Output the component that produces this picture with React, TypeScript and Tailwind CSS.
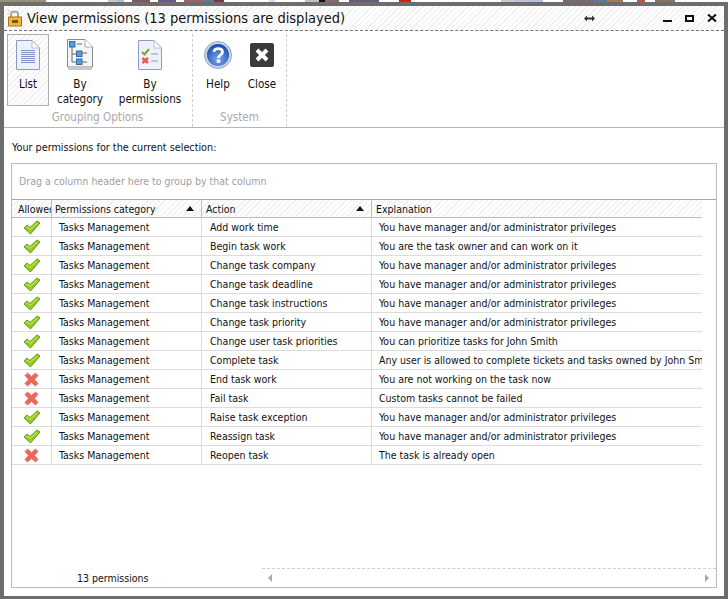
const hatch = "bg-[repeating-linear-gradient(135deg,#efefef_0px,#efefef_1px,#fdfdfd_1px,#fdfdfd_4px)]";
const rows: [boolean, string, string][] = [
  [true, "Add work time", "You have manager and/or administrator privileges"],
  [true, "Begin task work", "You are the task owner and can work on it"],
  [true, "Change task company", "You have manager and/or administrator privileges"],
  [true, "Change task deadline", "You have manager and/or administrator privileges"],
  [true, "Change task instructions", "You have manager and/or administrator privileges"],
  [true, "Change task priority", "You have manager and/or administrator privileges"],
  [true, "Change user task priorities", "You can prioritize tasks for John Smith"],
  [true, "Complete task", "Any user is allowed to complete tickets and tasks owned by John Smith"],
  [false, "End task work", "You are not working on the task now"],
  [false, "Fail task", "Custom tasks cannot be failed"],
  [true, "Raise task exception", "You have manager and/or administrator privileges"],
  [true, "Reassign task", "You have manager and/or administrator privileges"],
  [false, "Reopen task", "The task is already open"],
];
const scraps: [number, string][] = [
  [46, "#9a8f7a"], [50, "#ffffff"], [12, "#ffffff"], [10, "#c8c8c8"], [6, "#9fc3df"], [8, "#ffffff"], [18, "#7a5a5a"], [8, "#ffffff"], [18, "#6a5a8a"], [8, "#ffffff"], [20, "#a06060"], [10, "#5a7a9a"], [10, "#803050"], [45, "#ffffff"], [6, "#dddddd"], [30, "#ffffff"], [14, "#c0c0c0"], [6, "#111111"], [14, "#8a6a6a"],
  [10, "#ffffff"], [30, "#6a5a7a"], [20, "#ffffff"], [12, "#d02020"], [90, "#ffffff"], [14, "#c8c8d8"], [28, "#b8c0e0"], [20, "#ffffff"], [30, "#7a6a6a"], [14, "#5a7a9a"], [16, "#a08040"], [14, "#ffffff"], [8, "#c05050"], [10, "#ffffff"], [20, "#8a7060"],
];

function Check() {
  return (
    <svg width="18" height="15" viewBox="0 0 18 15">
      <path d="M1 8 L4 5 L7 7.5 L14 1 L17 3 L7.5 14 Z" fill="#98c91f" stroke="#669f14" strokeWidth="1" strokeLinejoin="round" />
      <path d="M3 8 L4.5 7 L7 9.5 L14 3" fill="none" stroke="#cfea77" strokeWidth="1" />
    </svg>
  );
}
function Cross() {
  return (
    <svg width="15" height="15" viewBox="0 0 15 15">
      <path d="M3.5 1 L7.5 4.5 L11.5 1 L14 3.5 L10.5 7.5 L14 11.5 L11.5 14 L7.5 10.5 L3.5 14 L1 11.5 L4.5 7.5 L1 3.5 Z" fill="#f0655a" stroke="#d98177" strokeWidth="1" strokeLinejoin="round" />
    </svg>
  );
}
function Page({ children }: { children?: React.ReactNode }) {
  return (
    <svg width="24" height="30" viewBox="0 0 24 30">
      <path d="M0.5 0.5 H16 L23.5 8 V29.5 H0.5 Z" fill="#eef1fb" stroke="#8e99c4" />
      <path d="M16 0.5 V8 H23.5 Z" fill="#fff" stroke="#b6bdd8" />
      {children}
    </svg>
  );
}
function ListIcon() {
  return (
    <Page>
      {[10, 12, 14, 16, 18, 20, 22].map((y) => (
        <rect key={y} x="5" y={y} width="14" height="1" fill="#7f8fc8" />
      ))}
    </Page>
  );
}
function CategoryIcon() {
  return (
    <svg width="26" height="32" viewBox="0 0 26 32">
      <path d="M0.5 0.5 H18 L25.5 8 V28 H0.5 Z" fill="#f6f6f6" stroke="#8a8a8a" />
      <rect x="1" y="28" width="24" height="3" fill="#c9c9c9" />
      <path d="M18 0.5 V8 H25.5" fill="#fff" stroke="#aaa" />
      <path d="M5 8 V23 H9 M5 15 H9 M10 5 H15 M15 14 H20 M15 23 H20" fill="none" stroke="#666" />
      <rect x="2.5" y="2.5" width="5.5" height="5.5" fill="#5b9bd5" stroke="#2f6ea5" />
      <rect x="9.5" y="12" width="5.5" height="5.5" fill="#5b9bd5" stroke="#2f6ea5" />
      <rect x="9.5" y="20" width="5.5" height="5.5" fill="#5b9bd5" stroke="#2f6ea5" />
    </svg>
  );
}
function PermIcon() {
  return (
    <Page>
      <path d="M4 12 L6.5 14.5 L11 9" fill="none" stroke="#6fae1e" strokeWidth="2" />
      <path d="M4.5 18 L10 23 M10 18 L4.5 23" fill="none" stroke="#e9574c" strokeWidth="2.4" />
      <path d="M13 14 H20 M13 21 H20" stroke="#7f9bc0" strokeWidth="1" />
    </Page>
  );
}
function HelpIcon() {
  return (
    <svg width="28" height="28" viewBox="0 0 28 28">
      <defs>
        <radialGradient id="hb" cx="50%" cy="70%" r="65%">
          <stop offset="0%" stopColor="#7fa8ee" />
          <stop offset="100%" stopColor="#1f4fa8" />
        </radialGradient>
      </defs>
      <circle cx="14" cy="14" r="13.5" fill="#c6d3ea" stroke="#8fa5cc" />
      <circle cx="14" cy="14" r="11" fill="url(#hb)" />
      <path d="M10 11 C10 6.5 18.5 6.5 18.5 11 C18.5 14 14.5 14 14.5 17" fill="none" stroke="#fff" strokeWidth="2.8" />
      <rect x="12.8" y="18.5" width="3.4" height="3.2" fill="#fff" />
    </svg>
  );
}
function CloseIcon() {
  return (
    <svg width="24" height="24" viewBox="0 0 24 24">
      <rect width="24" height="24" rx="2" fill="#3a3a3a" />
      <path d="M7 7 L17 17 M17 7 L7 17" stroke="#fff" strokeWidth="4" />
    </svg>
  );
}
function Tool({ icon, label, w, active }: { icon: React.ReactNode; label: React.ReactNode; w: string; active?: boolean }) {
  return (
    <div className={`${w} h-[72px] flex flex-col items-center text-center pt-[4px] border ${active ? `border-[#adadad] ${hatch}` : "border-transparent"}`}>
      <div className="h-[32px] shrink-0 flex items-center justify-center">{icon}</div>
      <div className="mt-[6px] shrink-0 leading-[15px] text-[#111] text-[11.6px]">{label}</div>
    </div>
  );
}

export default function App() {
  return (
    <div className="w-[728px] h-[599px] overflow-hidden bg-[#6d6d6d] flex flex-col text-[10.5px] text-[#111] [font-family:'DejaVu_Sans_Condensed','DejaVu_Sans',sans-serif]">
      <div className="h-[2px] shrink-0 bg-white flex">
        {scraps.map(([w, c], i) => (
          <div key={i} style={{ width: w, background: c }} />
        ))}
      </div>
      <div className="flex-1 min-h-0 pt-[4px] px-[4px] pb-[3px]">
        <div className="h-full bg-white flex flex-col">
          <div className={`h-[25px] shrink-0 flex items-center border-b border-dashed border-[#777] ${hatch}`}>
            <svg className="ml-[3px] mr-[4px]" width="16" height="18" viewBox="0 0 16 18">
              <path d="M4 8 V5 C4 1.5 11 1.5 11 5 V8" fill="none" stroke="#a9a9a9" strokeWidth="2" />
              <rect x="1.5" y="8" width="13" height="9" fill="#f0b53c" stroke="#a8761a" />
              <rect x="5" y="11" width="6" height="3" fill="#7a5410" />
              <path d="M1 1 L3 3 M0 5 H2" stroke="#f4c04a" />
            </svg>
            <span className="text-[14.5px] text-[#111] leading-none">View permissions (13 permissions are displayed)</span>
            <div className="ml-auto flex items-center">
              <svg className="mr-[68px]" width="11" height="7" viewBox="0 0 11 7">
                <path d="M0 3.5 L3 0.5 V2.5 H8 V0.5 L11 3.5 L8 6.5 V4.5 H3 V6.5 Z" fill="#333" />
              </svg>
              <div className="w-[9px] h-[2px] bg-[#111] mt-[6px] mr-[13px]" />
              <div className="w-[9px] h-[7px] border-2 border-[#111] mr-[13px]" />
              <svg className="mr-[7px]" width="10" height="8" viewBox="0 0 10 8">
                <path d="M1 0.5 L9 7.5 M9 0.5 L1 7.5" stroke="#111" strokeWidth="2" />
              </svg>
            </div>
          </div>

          <div className="h-[97px] shrink-0 flex border-b border-[#b5b5b5] pl-[3px] pt-[3px]">
            <div className="w-[186px] flex flex-col border-r border-dashed border-[#cfcfcf]">
              <div className="flex">
                <Tool active w="w-[42px]" icon={<ListIcon />} label="List" />
                <Tool w="w-[62px]" icon={<CategoryIcon />} label={<>By<br />category</>} />
                <Tool w="w-[78px]" icon={<PermIcon />} label={<>By<br />permissions</>} />
              </div>
              <div className="text-center text-[11.6px] text-[#a9a9a9] mt-[3px] pr-[4px]">Grouping Options</div>
            </div>
            <div className="w-[94px] flex flex-col border-r border-dashed border-[#cfcfcf]">
              <div className="flex pl-[4px]">
                <Tool w="w-[42px]" icon={<HelpIcon />} label="Help" />
                <Tool w="w-[46px]" icon={<CloseIcon />} label="Close" />
              </div>
              <div className="text-center text-[11.6px] text-[#a9a9a9] mt-[3px]">System</div>
            </div>
          </div>

          <div className="flex-1 flex flex-col pl-[7px] pr-[7px] pb-[8px] min-h-0">
            <div className="h-[35px] shrink-0 flex items-center pt-[5px] pl-[1px] text-[10.75px]">Your permissions for the current selection:</div>
            <div className="flex-1 border border-[#bcbcbc] flex flex-col min-h-0">
              <div className="h-[36px] shrink-0 flex items-center pl-[7px] pt-[1px] text-[#a0a0a0] border-b border-[#a9a9a9]">
                Drag a column header here to group by that column
              </div>
              <div className="flex-1 flex flex-col min-h-0">
                <div className={`w-[690px] h-[18px] shrink-0 flex items-center border-b border-[#bdbdbd] ${hatch}`}>
                  <div className="w-[40px] h-full flex items-center border-r border-[#bdbdbd] pl-[6px] pt-[2px] overflow-hidden whitespace-nowrap">Allowed</div>
                  <div className="w-[150px] h-full flex items-center justify-between border-r border-[#bdbdbd] pl-[3px] pr-[7px] pt-[2px]">
                    Permissions category
                    <span className="border-x-[4px] border-x-transparent border-b-[5px] border-b-[#111] -mt-[2px]" />
                  </div>
                  <div className="w-[170px] h-full flex items-center justify-between border-r border-[#bdbdbd] pl-[4px] pr-[7px] pt-[2px]">
                    Action
                    <span className="border-x-[4px] border-x-transparent border-b-[5px] border-b-[#111] -mt-[2px]" />
                  </div>
                  <div className="flex-1 h-full flex items-center pl-[4px] pt-[2px]">Explanation</div>
                </div>
                {rows.map(([ok, action, why], i) => (
                  <div key={i} className="w-[690px] h-[19px] shrink-0 flex items-center border-b border-[#dcdcdc]">
                    <div className="w-[40px] h-full flex items-center justify-center border-r border-[#dcdcdc]">{ok ? <Check /> : <Cross />}</div>
                    <div className="w-[150px] h-full flex items-center border-r border-[#dcdcdc] pl-[7px] pt-[1px]">Tasks Management</div>
                    <div className="w-[170px] h-full flex items-center border-r border-[#dcdcdc] pl-[8px] pt-[1px]">{action}</div>
                    <div className="flex-1 h-full flex items-center pl-[7px] pt-[1px] overflow-hidden whitespace-nowrap">{why}</div>
                  </div>
                ))}
                <div className="mt-auto h-[19px] shrink-0 flex">
                  <div className="w-[250px] pl-[65px] flex items-center pt-[3px]">13 permissions</div>
                  <div className="flex-1 border-t border-dashed border-[#cfcfcf] flex items-center justify-between pl-[6px] pr-[7px]">
                    <span className="border-y-[4px] border-y-transparent border-r-[4px] border-r-[#a8a8a8]" />
                    <span className="border-y-[4px] border-y-transparent border-l-[4px] border-l-[#a8a8a8]" />
                  </div>
                </div>
              </div>
            </div>
          </div>
        </div>
      </div>
    </div>
  );
}
